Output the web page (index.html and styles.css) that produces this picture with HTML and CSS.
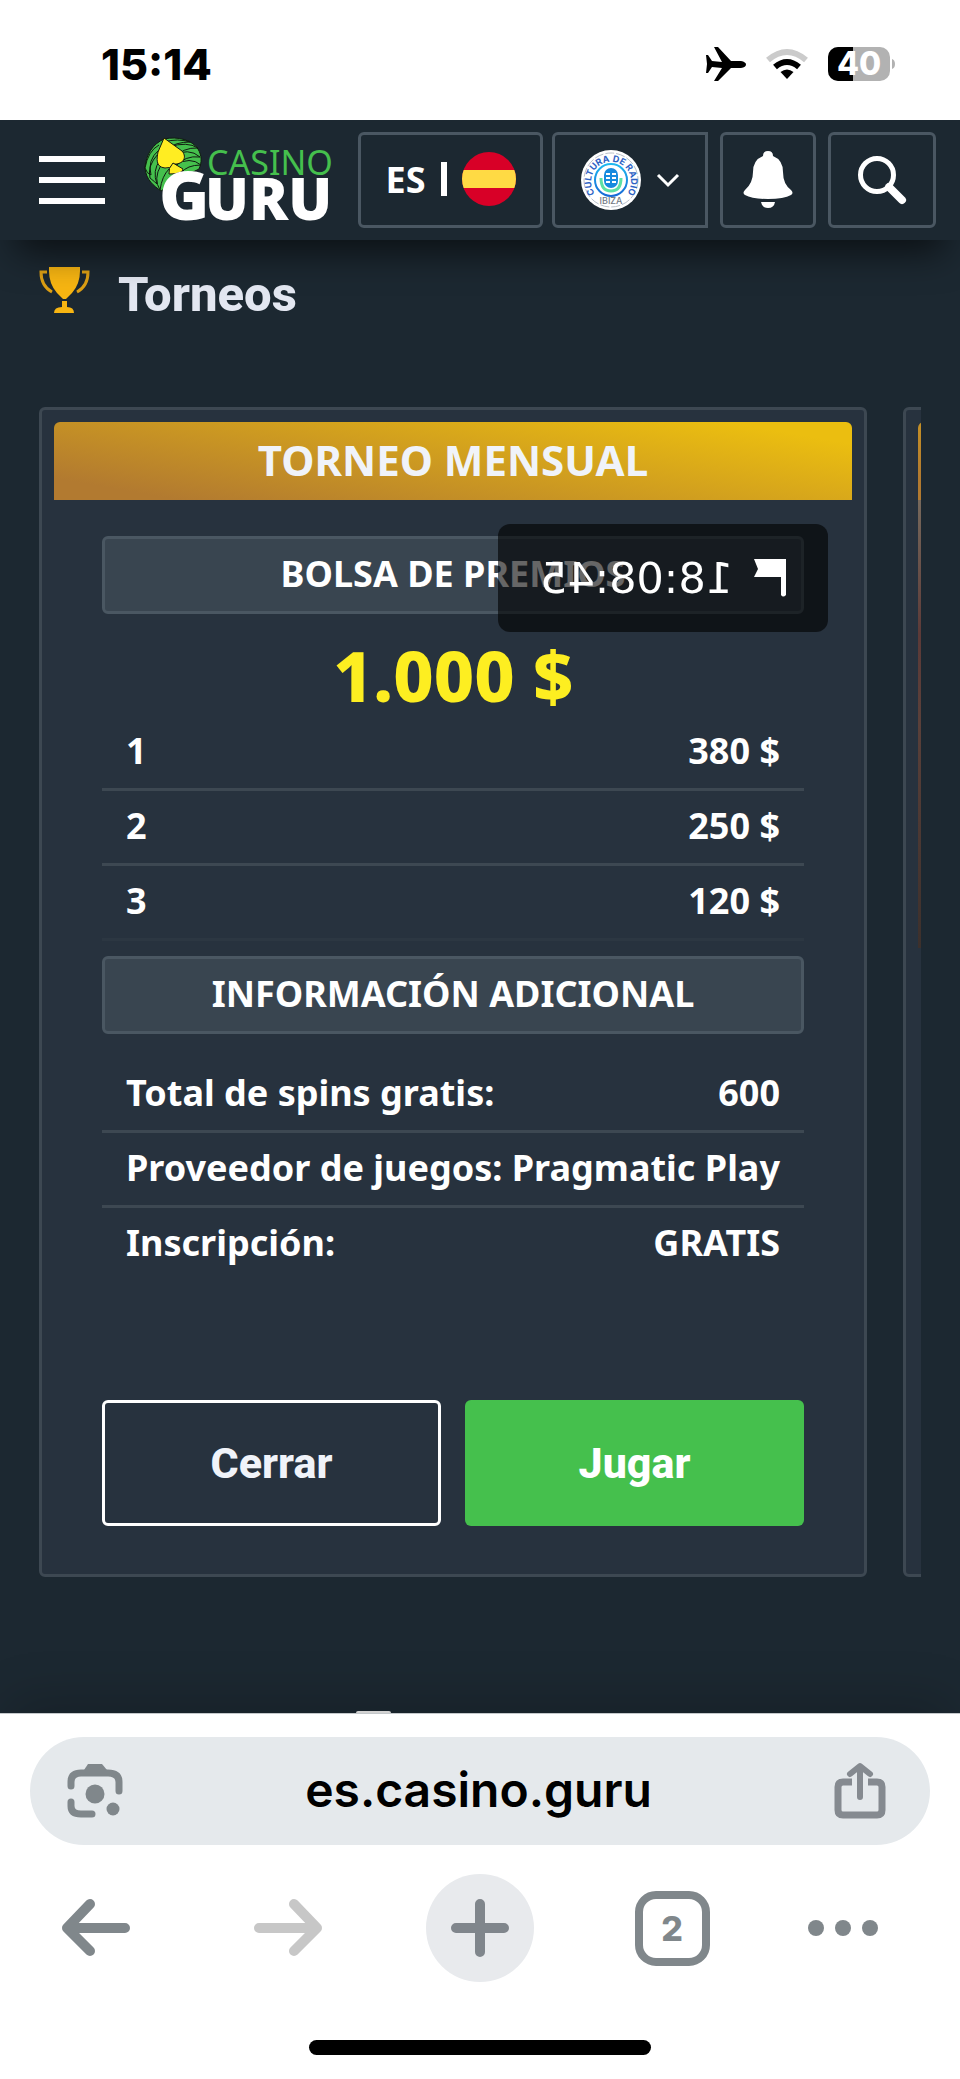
FILE: index.html
```html
<!DOCTYPE html>
<html lang="es">

<head>
  <meta charset="utf-8">
  <meta name="viewport" content="width=device-width, initial-scale=1">
  <title>Torneos | Casino Guru</title>
  <link rel="stylesheet" href="styles.css">
</head>

<body>
  <div class="status-bar">
    <span class="status-time">15:14</span>
    <div class="status-icons">
      <svg width="40" height="36" viewBox="0 0 40 36">
        <path d="M0 9h2l4 6 10 1L8 1h4l13 14h10q5 1 5 3.500t-5 3.500H25L12 35H8l8-13-10-1-4 6H0l1-9z" />
      </svg>
      <svg width="42" height="32" viewBox="0 0 42 32">
        <path d="M2 12Q21-4 40 12" fill="none" stroke="#cbcbcb" stroke-width="6" />
        <path d="M9 19q12-10 24 0" fill="none" stroke="#000" stroke-width="6" />
        <path d="M14.500 24q6.500-5 13 0L21 31z" />
      </svg>
      <svg width="68" height="36" viewBox="0 0 68 36">
        <clipPath id="battery"><rect y="1" width="62" height="34" rx="10" /></clipPath>
        <g clip-path="url(#battery)">
          <path fill="#b2b2b2" d="M0 0h62v36H0z" />
          <path d="M0 0h25v36H0z" />
        </g>
        <path fill="#b2b2b2" d="M64 13q3 1 3 5t-3 5z" />
        <text x="31" y="29" class="battery-text">40</text>
      </svg>
    </div>
  </div>

  <header class="header">
    <button class="menu-button" aria-label="Menú"><span></span><span></span><span></span></button>

    <a class="logo" href="#" aria-label="Casino Guru">
      <svg width="190" height="86" viewBox="0 0 190 86">
        <g fill="#45c04d" stroke="#101a10" stroke-width="1">
          <path d="M20 2C34-1 48 3 54 12c4 7 4 13 1 20l-12 6-26 16C10 49 2 43 1 31 2 17 9 7 20 2z" />
          <path d="M20 5q14-4 26 0-14 0-24 7M25 10q18-6 29 1-15-1-25 11M27 19q18-9 29 1-15-2-25 10M31 28q15-9 26 0-14 0-20 8" />
          <path d="M15 8Q4 14 1 31q2 6 6 7Q3 23 15 13M14 17Q3 29 6 41q5 4 7 6-5-13 3-24M17 28q-8 14-1 25 2-14 9-21" />
        </g>
        <path d="M20 1l18 13c6 7 0 14-9 13q-3 5-8 4c-10-1-8-10-7-16z" fill="#ffed22" stroke="#131a13" stroke-width="1" />
        <path d="M29 26l10 6q0 5-14 5-1-6 4-11z" fill="#ffed22" stroke="#131a13" stroke-width="1" />
        <text x="63" y="38" class="logo-casino">CASINO</text>
        <text x="15" y="83" class="logo-g">G</text>
        <text x="61" y="83" class="logo-uru">URU</text>
      </svg>
    </a>

    <button class="header-button lang-button">
      ES <span class="lang-separator"></span>
      <svg width="54" height="54" viewBox="0 0 54 54">
        <clipPath id="flag"><circle cx="27" cy="27" r="27" /></clipPath>
        <g clip-path="url(#flag)">
          <path fill="#d80027" d="M0 0h54v54H0z" />
          <path fill="#ffda44" d="M0 18h54v18H0z" />
        </g>
      </svg>
    </button>

    <button class="header-button user-button" aria-label="Perfil">
      <svg width="60" height="60" viewBox="0 0 60 60">
        <defs>
          <path id="ring" d="M16 46A20 20 0 1 1 44 46" />
          <linearGradient id="blue" x2="0" y2="1">
            <stop stop-color="#1db9f0" />
            <stop offset="1" stop-color="#1769d6" />
          </linearGradient>
        </defs>
        <circle cx="30" cy="30" r="30" fill="#fff" />
        <circle cx="30" cy="30" r="27" fill="none" stroke="#b8bfc8" stroke-width="1" stroke-dasharray="9 2" />
        <circle cx="30" cy="30" r="16" fill="none" stroke="url(#blue)" stroke-width="2" />
        <path d="M20 28q0 13 10 13t10-13" fill="none" stroke="#5ce0a4" stroke-width="3" />
        <rect x="23" y="18" width="14" height="20" rx="7" fill="#168ade" />
        <path d="M25 24h4m2 0h4m-10 4h4m2 0h4m-10 4h4m2 0h4" stroke="#fff" stroke-width="2" />
        <text class="ring-text"><textPath href="#ring" startOffset="50%">CULTURA DE RADIO</textPath></text>
        <text x="30" y="54" class="ring-ibiza">IBIZA</text>
      </svg>
      <svg width="22" height="14" viewBox="0 0 22 14">
        <path d="M1 2l10 10L21 2" fill="none" stroke="#fff" stroke-width="3" />
      </svg>
    </button>

    <button class="header-button bell-button" aria-label="Notificaciones">
      <svg width="50" height="58" viewBox="0 0 50 58">
        <path d="M20 5q0-5 5-5t5 5q10 4 10 16 0 12 8 18 3 3 0 5-7 4-23 4T2 44q-3-2 0-5 8-7 8-18Q10 9 20 5zM18 51h14q-1 6-7 6t-7-6z" fill="#fff" />
      </svg>
    </button>

    <button class="header-button search-button" aria-label="Buscar">
      <svg width="48" height="48" viewBox="0 0 48 48">
        <circle cx="19" cy="19" r="16.500" fill="none" stroke="#fff" stroke-width="5" />
        <path d="M31 31l13 13" stroke="#fff" stroke-width="8" stroke-linecap="round" />
      </svg>
    </button>
  </header>

  <main class="content">
    <h1 class="page-title">
      <svg width="52" height="46" viewBox="0 0 52 46">
        <path d="M10 0h31v4q0 13-8 22-5 5-6 6h-3q-1-1-6-6-8-9-8-22zM23 34h5v6q7 0 7 6H15q0-6 8-6z" fill="#f7b512" />
        <path d="M8 5H2q0 14 11 20M43 5h6q0 14-11 20" fill="none" stroke="#dd9f14" stroke-width="3" />
      </svg>
      Torneos
    </h1>

    <div class="carousel">
      <article class="card">
        <h2 class="card-banner">TORNEO MENSUAL</h2>

        <div class="timer">
          <svg width="33" height="40" viewBox="0 0 33 40">
            <path d="M0 1h32l-4 10 4 8H5v18q-2 3-5 0z" fill="#fff" />
          </svg>
          <span>18:08:45</span>
        </div>

        <div class="card-body">
          <h3 class="card-label">BOLSA DE PREMIOS</h3>
          <p class="prize">1.000 $</p>
          <table class="rows prizes">
            <tr><th scope="row">1</th><td>380 $</td></tr>
            <tr><th scope="row">2</th><td>250 $</td></tr>
            <tr><th scope="row">3</th><td>120 $</td></tr>
          </table>

          <h3 class="card-label">INFORMACIÓN ADICIONAL</h3>
          <table class="rows info">
            <tr><th scope="row">Total de spins gratis:</th><td>600</td></tr>
            <tr><th scope="row">Proveedor de juegos:</th><td>Pragmatic Play</td></tr>
            <tr><th scope="row">Inscripción:</th><td>GRATIS</td></tr>
          </table>

          <div class="actions">
            <button class="action close">Cerrar</button>
            <button class="action play">Jugar</button>
          </div>
        </div>
      </article>

      <article class="card">
        <div class="card-banner"></div>
        <div class="card-picture"></div>
      </article>
    </div>

    <div class="sheet-handle"></div>
  </main>

  <footer class="browser-bar">
    <div class="omnibox">
      <button aria-label="Buscar con la cámara">
        <svg width="56" height="56" viewBox="0 0 56 56" fill="none" stroke="#80878b" stroke-width="7" stroke-linecap="round">
          <path d="M4 23v-4q0-9 10-9h27q11 0 11 9v9M4 39v4q0 8 10 8h11" />
          <path d="M17 7l4-6h14l5 6z" fill="#80878b" stroke="none" />
          <circle cx="28" cy="31" r="9.500" fill="#80878b" stroke="none" />
          <circle cx="46" cy="46" r="6.500" fill="#80878b" stroke="none" />
        </svg>
      </button>
      <a class="url" href="#">es.casino.guru</a>
      <button aria-label="Compartir">
        <svg width="52" height="56" viewBox="0 0 52 56" fill="none" stroke="#858a90" stroke-width="6">
          <path d="M18 19H9q-5 0-5 5v23q0 5 5 5h34q5 0 5-5V24q0-5-5-5h-9" stroke-width="7" />
          <path d="M26 34V4M16 11l10-8 10 8" stroke-linecap="round" stroke-linejoin="round" />
        </svg>
      </button>
    </div>

    <nav class="browser-nav">
      <button aria-label="Atrás">
        <svg width="70" height="58" viewBox="0 0 70 58" fill="none" stroke="#80878b" stroke-width="10" stroke-linecap="round" stroke-linejoin="round">
          <path d="M64 29H6M29 5L6 29l23 23" />
        </svg>
      </button>
      <button aria-label="Adelante" disabled>
        <svg width="70" height="58" viewBox="0 0 70 58" fill="none" stroke="#c7c7c7" stroke-width="10" stroke-linecap="round" stroke-linejoin="round">
          <path d="M6 29h58M41 5l23 24-23 23" />
        </svg>
      </button>
      <button class="new-tab" aria-label="Nueva pestaña">
        <svg width="58" height="58" viewBox="0 0 58 58" stroke="#80868c" stroke-width="10" stroke-linecap="round">
          <path d="M29 5v48M5 29h48" />
        </svg>
      </button>
      <button class="tabs" aria-label="Pestañas abiertas: 2">2</button>
      <button class="more" aria-label="Más">
        <svg width="70" height="16" viewBox="0 0 70 16" fill="#80878b">
          <circle cx="8" cy="8" r="8" />
          <circle cx="35" cy="8" r="8" />
          <circle cx="62" cy="8" r="8" />
        </svg>
      </button>
    </nav>

    <div class="home-indicator"></div>
  </footer>
</body>

</html>
```
FILE: styles.css
```css
:root {
  --page-bg: #1c2831;
  --card-bg: #27323e;
  --card-border: #3d4852;
  --control-border: #4a5762;
  --label-bg: #394550;
  --green: #45c04d;
  --yellow: #fdee21;
  --gray: #80878b;
  --side: 39px;
}

* {
  box-sizing: border-box;
  margin: 0;
  padding: 0;
}

body {
  display: flex;
  flex-direction: column;
  min-height: 100vh;
  background: var(--page-bg);
  color: #fff;
  font-family: "Noto Sans", sans-serif;
}

button {
  background: none;
  border: none;
  color: inherit;
  font: inherit;
  cursor: pointer;
}

svg {
  display: block;
  flex: none;
  overflow: visible;
}

/* Phone status bar */
.status-bar {
  display: flex;
  align-items: center;
  justify-content: space-between;
  height: 120px;
  padding: 8px 64px 0 101px;
  background: #fff;
  color: #000;
}

.status-time {
  font: 800 43px Inter, sans-serif;
}

.status-icons {
  display: flex;
  align-items: center;
  gap: 20px;
}

.battery-text {
  fill: #fff;
  font: 800 32px Inter, sans-serif;
  text-anchor: middle;
}

/* Site header */
.header {
  position: relative;
  z-index: 2;
  display: flex;
  align-items: center;
  height: 120px;
  padding: 0 24px 0 var(--side);
  background: var(--page-bg);
  box-shadow: 0 28px 36px -16px rgba(0, 0, 0, 0.6);
}

.menu-button {
  display: flex;
  flex-direction: column;
  gap: 15px;
  width: 66px;
}

.menu-button span {
  height: 6px;
  background: #fff;
}

.logo {
  margin-left: 39px;
  margin-right: auto;
}

.logo-casino {
  fill: var(--green);
  font: 400 34px "Noto Sans", sans-serif;
}

.logo-g,
.logo-uru {
  fill: #fff;
  font: 900 58px "Noto Sans", sans-serif;
}

.logo-g {
  font-size: 68px;
}

.header-button {
  display: flex;
  align-items: center;
  justify-content: center;
  height: 96px;
  margin-left: 12px;
  border: 3px solid var(--control-border);
  border-radius: 6px;
}

.lang-button {
  gap: 15px;
  width: 185px;
  padding-bottom: 2px;
  font: 700 36px "Noto Sans", sans-serif;
}

.lang-separator {
  width: 6px;
  height: 34px;
  background: #fff;
}

.user-button {
  gap: 16px;
  width: 156px;
  margin-left: 9px;
  border-radius: 6px 0 0 6px;
}

.bell-button {
  width: 96px;
}

.search-button {
  width: 108px;
}

.ring-text {
  fill: #2d62c4;
  font: 700 9px Inter, sans-serif;
  text-anchor: middle;
}

.ring-ibiza {
  fill: #737a84;
  font: 500 9px Inter, sans-serif;
  text-anchor: middle;
}

/* Tournaments */
.content {
  flex: 1;
  display: flex;
  flex-direction: column;
  padding: 27px var(--side) 0;
}

.page-title {
  display: flex;
  align-items: flex-start;
  gap: 27px;
  margin-bottom: 84px;
  color: #e3e7f1;
  font: 800 49px/56px Roboto, sans-serif;
}

.carousel {
  display: flex;
  gap: 36px;
  overflow: hidden;
}

.card {
  position: relative;
  flex: 0 0 calc(100% - 54px);
  padding: 12px;
  background: var(--card-bg);
  border: 3px solid var(--card-border);
  border-radius: 6px;
}

.card-banner {
  height: 78px;
  background: linear-gradient(10deg, #b27a30 10%, #ebbe10 90%);
  border-radius: 6px 6px 0 0;
  color: #f0f3f9;
  font-size: 42px;
  font-weight: 700;
  line-height: 76px;
  text-align: center;
}

.card-picture {
  height: 448px;
  background: linear-gradient(#77695c, #5c3a38 30%, #5a403a 50%, #3c302c);
}

.timer {
  position: absolute;
  top: 114px;
  right: 36px;
  display: flex;
  align-items: center;
  justify-content: center;
  gap: 20px;
  width: 330px;
  height: 108px;
  background: rgba(0, 0, 0, 0.6);
  border-radius: 12px;
  font: 400 43px "DejaVu Sans", sans-serif;
  transform: rotateY(180deg);
}

.card-body {
  padding: 36px 48px;
}

.card-label {
  height: 78px;
  background: var(--label-bg);
  border: 3px solid var(--control-border);
  border-radius: 6px;
  font-size: 36px;
  font-weight: 700;
  line-height: 70px;
  text-align: center;
}

.prize {
  padding: 22px 0 2px;
  color: var(--yellow);
  font: 800 70px/78px "Noto Sans", sans-serif;
  text-align: center;
}

.rows {
  width: 100%;
  border-spacing: 0;
  font-size: 36px;
  font-weight: 700;
  line-height: 48px;
  white-space: nowrap;
}

.rows th,
.rows td {
  height: 75px;
  padding-bottom: 2px;
  border-bottom: 3px solid var(--card-border);
}

.rows th {
  padding-left: 24px;
  text-align: left;
}

.rows td {
  padding-right: 24px;
  text-align: right;
}

.prizes {
  margin-bottom: 15px;
}

.prizes tr:last-child > * {
  border-color: #2c3742;
}

.info {
  margin-top: 24px;
}

.info tr:last-child > * {
  border-color: transparent;
}

.actions {
  display: grid;
  grid-template-columns: 1fr 1fr;
  gap: 24px;
  margin-top: 117px;
}

.action {
  height: 126px;
  border-radius: 6px;
  font: 800 43px Roboto, sans-serif;
}

.close {
  border: 3px solid #fff;
  color: #f0f3f9;
}

.play {
  background: var(--green);
}

.sheet-handle {
  width: 35px;
  height: 2px;
  margin: auto 0 0 317px;
  background: #f0f0f0;
  border-radius: 2px 2px 0 0;
}

/* Browser chrome */
.browser-bar {
  padding: 23px 30px 24px;
  background: #fff;
  border-top: 1px solid #c4c8cb;
  box-shadow: 0 -20px 50px -10px rgba(0, 0, 0, 0.2);
}

.omnibox {
  display: flex;
  align-items: center;
  justify-content: space-between;
  height: 108px;
  padding: 0 44px 0 37px;
  background: #e5e9ec;
  border-radius: 54px;
}

.url {
  padding-bottom: 4px;
  color: #000;
  font: 600 48px Inter, sans-serif;
  text-decoration: none;
}

.browser-nav {
  display: grid;
  grid-template-columns: repeat(5, 1fr);
  align-items: center;
  justify-items: center;
  margin: 29px -30px 58px;
}

.new-tab {
  display: flex;
  align-items: center;
  justify-content: center;
  width: 108px;
  height: 108px;
  background: #e8eaed;
  border-radius: 50%;
}

.tabs {
  width: 75px;
  height: 75px;
  border: 8px solid var(--gray);
  border-radius: 21px;
  color: var(--gray);
  font: 800 34px Inter, sans-serif;
}

.more {
  justify-self: start;
  margin-left: 40px;
}

.home-indicator {
  width: 342px;
  height: 15px;
  margin: 0 auto;
  background: #000;
  border-radius: 8px;
}
```
